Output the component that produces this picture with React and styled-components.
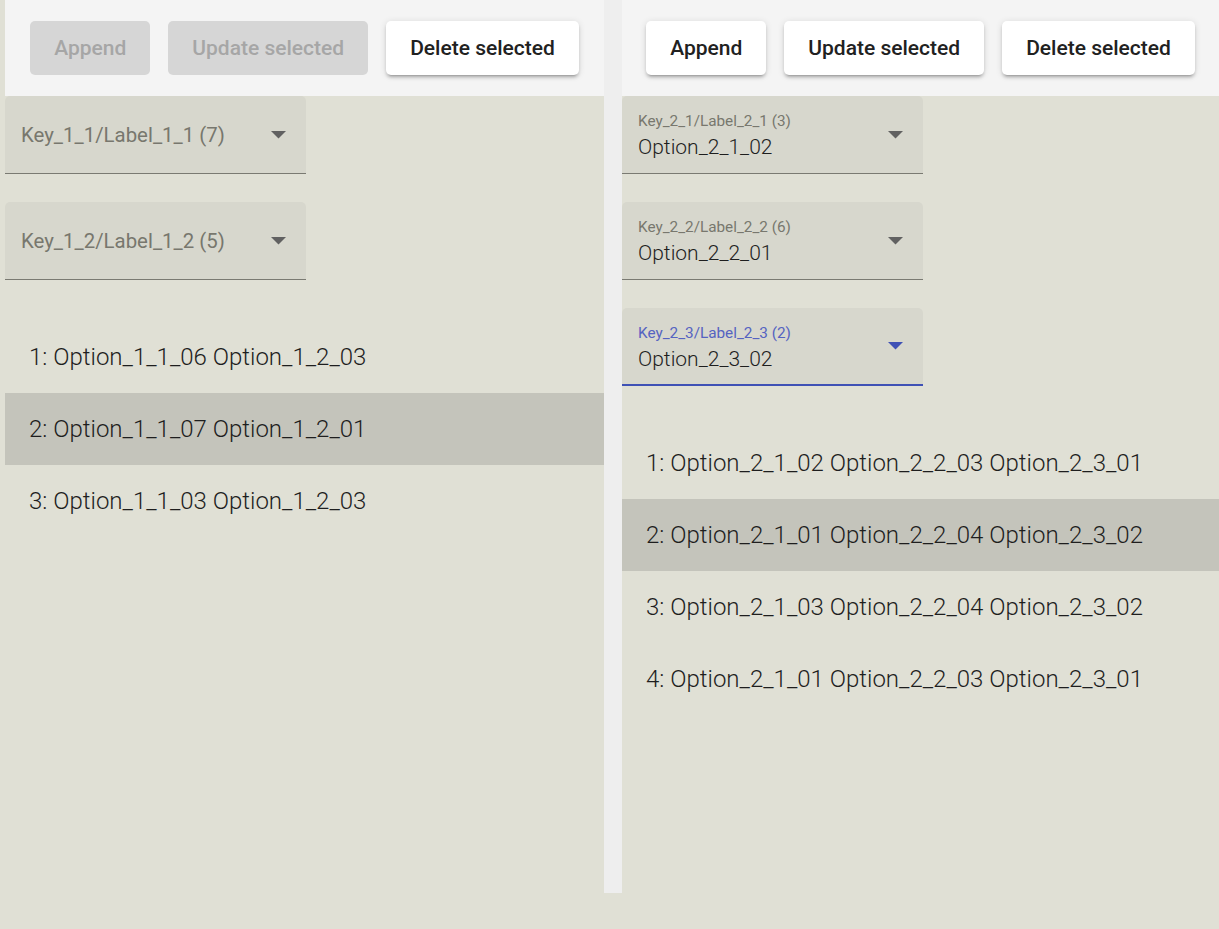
import React from 'react';
import styled, { createGlobalStyle, css } from 'styled-components';

const GlobalStyle = createGlobalStyle`
  html, body {
    margin: 0;
    padding: 0;
    background: #e0e0d5;
    font-family: Roboto, "Liberation Sans", sans-serif;
  }
`;

const Page = styled.div`
  display: flex;
  align-items: flex-start;
  padding-left: 5px;
  min-height: 929px;
  box-sizing: border-box;
`;

const Panel = styled.div`
  width: ${p => p.$width ? p.$width + 'px' : 'auto'};
  flex: ${p => p.$width ? '0 0 auto' : '1 1 auto'};
`;

const Divider = styled.div`
  width: 18px;
  height: 893px;
  background: #eeeeee;
  flex: 0 0 auto;
`;

const Toolbar = styled.div`
  height: 96px;
  background: #f4f4f4;
  display: flex;
  align-items: center;
  justify-content: center;
  gap: 18px;
`;

const Button = styled.button`
  height: 54px;
  padding: 0 24px;
  border: none;
  border-radius: 5px;
  font-family: Roboto, "Liberation Sans", sans-serif;
  font-size: 21px;
  font-weight: 500;
  background: #ffffff;
  color: #212121;
  box-shadow: 0 4px 2px -3px rgba(0,0,0,.2), 0 3px 3px 0 rgba(0,0,0,.14), 0 1px 7px 0 rgba(0,0,0,.12);
  cursor: pointer;

  ${p => p.disabled && css`
    background: #d6d6d6;
    color: #a6a6a6;
    box-shadow: none;
    cursor: default;
  `}
`;

const Fields = styled.div`
  display: flex;
  flex-direction: column;
  gap: 28px;
`;

const Field = styled.div`
  width: 301px;
  height: 78px;
  box-sizing: border-box;
  background: #d7d7cd;
  border-radius: 5px 5px 0 0;
  border-bottom: ${p => p.$focused ? '2px solid #3f51b5' : '1px solid #7a7a72'};
  display: flex;
  align-items: center;
  padding: 0 20px 0 16px;
`;

const FieldText = styled.div`
  flex: 1;
  display: flex;
  flex-direction: column;
  align-self: ${p => p.$filled ? 'flex-start' : 'center'};
  padding-top: ${p => p.$filled ? '16px' : '0'};
`;

const FieldLabel = styled.div`
  font-size: ${p => p.$small ? '15.3px' : '20.4px'};
  line-height: ${p => p.$small ? '18px' : '24px'};
  font-weight: 400;
  color: ${p => p.$focused ? '#5563c1' : '#78776e'};
  white-space: nowrap;
`;

const FieldValue = styled.div`
  margin-top: 5px;
  font-size: 21px;
  line-height: 24px;
  font-weight: 300;
  color: #1e1e1e;
`;

const Caret = ({ focused }) => (
  <svg width="15" height="8" viewBox="0 0 15 8">
    <path d="M0 0 L15 0 L7.5 7.5 Z" fill={focused ? '#3f51b5' : '#616161'} />
  </svg>
);

const List = styled.div`
  margin-top: 41px;
`;

const Row = styled.div`
  height: 72px;
  display: flex;
  align-items: center;
  padding-left: 24px;
  font-size: 24px;
  font-weight: 300;
  color: #1e1e1e;
  background: ${p => p.$selected ? '#c4c4bb' : 'transparent'};
  white-space: nowrap;
`;

const SelectField = ({ label, value, focused }) => (
  <Field $focused={focused}>
    <FieldText $filled={!!value}>
      <FieldLabel $small={!!value} $focused={focused}>{label}</FieldLabel>
      {value && <FieldValue>{value}</FieldValue>}
    </FieldText>
    <Caret focused={focused} />
  </Field>
);

const left = {
  width: 599,
  disabled: true,
  fields: [
    { label: 'Key_1_1/Label_1_1 (7)' },
    { label: 'Key_1_2/Label_1_2 (5)' },
  ],
  rows: [
    '1: Option_1_1_06 Option_1_2_03',
    '2: Option_1_1_07 Option_1_2_01',
    '3: Option_1_1_03 Option_1_2_03',
  ],
  selected: 1,
};

const right = {
  disabled: false,
  fields: [
    { label: 'Key_2_1/Label_2_1 (3)', value: 'Option_2_1_02' },
    { label: 'Key_2_2/Label_2_2 (6)', value: 'Option_2_2_01' },
    { label: 'Key_2_3/Label_2_3 (2)', value: 'Option_2_3_02', focused: true },
  ],
  rows: [
    '1: Option_2_1_02 Option_2_2_03 Option_2_3_01',
    '2: Option_2_1_01 Option_2_2_04 Option_2_3_02',
    '3: Option_2_1_03 Option_2_2_04 Option_2_3_02',
    '4: Option_2_1_01 Option_2_2_03 Option_2_3_01',
  ],
  selected: 1,
};

const Editor = ({ data }) => (
  <Panel $width={data.width}>
    <Toolbar>
      <Button disabled={data.disabled}>Append</Button>
      <Button disabled={data.disabled}>Update selected</Button>
      <Button>Delete selected</Button>
    </Toolbar>
    <Fields>
      {data.fields.map(f => (
        <SelectField key={f.label} {...f} />
      ))}
    </Fields>
    <List>
      {data.rows.map((r, i) => (
        <Row key={r} $selected={i === data.selected}>{r}</Row>
      ))}
    </List>
  </Panel>
);

export default function App() {
  return (
    <>
      <GlobalStyle />
      <Page>
        <Editor data={left} />
        <Divider />
        <Editor data={right} />
      </Page>
    </>
  );
}
